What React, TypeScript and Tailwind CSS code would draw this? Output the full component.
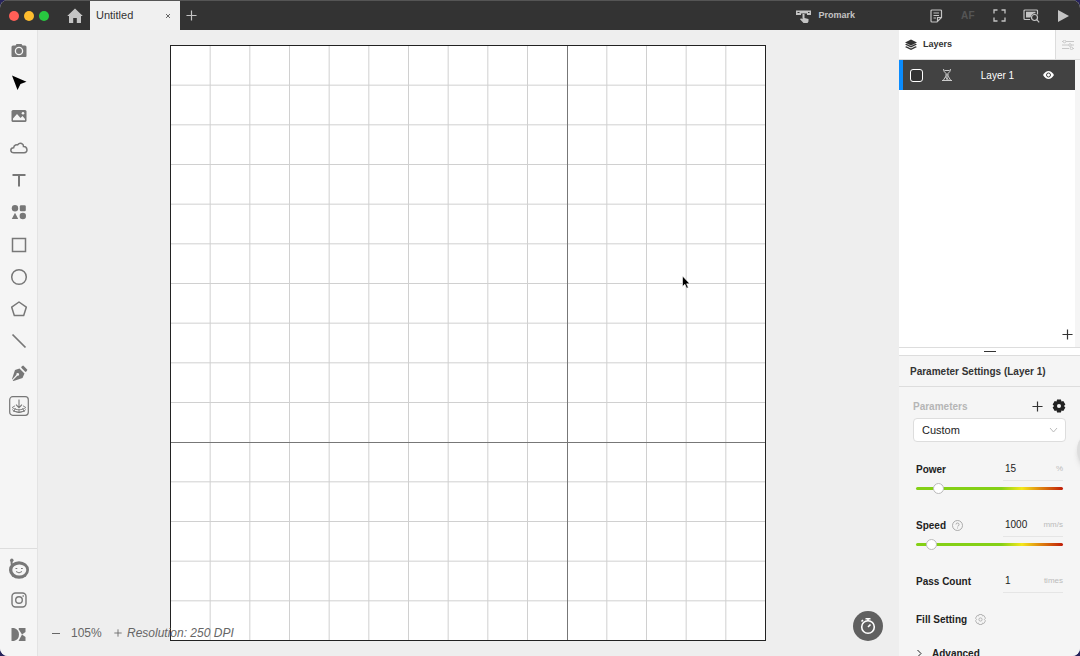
import { useState } from 'react';
import type { ReactNode } from 'react';

const CELLS = 15;
const AXIS = 10;
const BOARD = 595;

const icon = { fill: 'none', stroke: 'currentColor', strokeWidth: 1.5 } as const;

const tools: { name: string; active?: boolean; art: ReactNode }[] = [
  {
    name: 'Camera',
    art: (
      <>
        <path fill="currentColor" d="M5 4.500h1.500L7.500 3h5l1 1.500H16q1.500 0 1.500 1.500v9q0 1-1 1h-13q-1 0-1-1V6q0-1.500 1.500-1.500z" />
        <circle cx="10" cy="10" r="3.600" fill="none" stroke="#f5f5f5" strokeWidth="1.300" />
      </>
    ),
  },
  { name: 'Select', active: true, art: <path fill="currentColor" d="M3 2.500 17.500 8.800 11.500 11 8.500 17z" /> },
  {
    name: 'Image',
    art: (
      <>
        <rect x="2.500" y="4" width="15" height="12" rx="1.500" fill="currentColor" />
        <path fill="#f5f5f5" d="M4 12.500 8 8l3.500 4 2-2 2.500 3v1.300H4z" />
        <circle cx="14" cy="7.300" r="1.300" fill="#f5f5f5" />
      </>
    ),
  },
  { name: 'Cloud', art: <path {...icon} d="M5 14.800c-4 0-4.300-4.600-.4-5C5 6.500 8 6.500 8.700 6.800 11 3.800 14.700 5.800 14.500 8.500c4-.2 5 6.300.5 6.300z" /> },
  { name: 'Text', art: <path {...icon} strokeWidth="2" d="M3.500 5h13M10 5v11.500" /> },
  {
    name: 'Shapes',
    art: (
      <g fill="currentColor">
        <circle cx="6" cy="6.300" r="3.200" />
        <rect x="10.800" y="3.300" width="6" height="6" rx="1.200" />
        <path d="M6 10.700 9.200 17H2.800z" />
        <circle cx="13.800" cy="14" r="3.200" />
      </g>
    ),
  },
  { name: 'Rectangle', art: <rect {...icon} x="3.500" y="3.500" width="13" height="13" /> },
  { name: 'Ellipse', art: <circle {...icon} cx="10" cy="10" r="7.300" /> },
  { name: 'Polygon', art: <path {...icon} strokeLinejoin="round" d="m10 3 7.300 5.200-2.600 8.300H5.300L2.700 8.200z" /> },
  { name: 'Line', art: <path {...icon} strokeWidth="1.700" d="m3.500 3.500 13 13" /> },
  {
    name: 'Pen',
    art: (
      <>
        <path fill="currentColor" d="M10.500 4.500 15.500 9.500 13.500 14 4.500 17l-.8-.6 4.600-4.700a1.400 1.400 0 1 0-.9-.9L3.200 15.500 3 15l3-9z" />
        <path fill="currentColor" d="m12.800 2.200 1.400-.6 4.200 4.200-.8 1.500-1.200.6-4.300-4.300z" />
      </>
    ),
  },
  {
    name: 'Material',
    art: (
      <g fill="none" stroke="currentColor">
        <rect x=".7" y=".7" width="18.600" height="18.600" rx="3" strokeWidth="1.200" />
        <path d="M10 3.500v8M7 8.700l3 3 3-3" strokeWidth="1.100" />
        <path d="M6 9.800 3.200 11.500c3.500 3 10.100 3 13.600 0L14 9.800M3.200 13.500c3.500 3.500 10.100 3.500 13.600 0M4 15q6 3 12 0M6.500 12.200l-1.500 3M10 13.500v3.500M13.500 12.200l1.500 3" strokeWidth=".9" />
      </g>
    ),
  },
];

function Gear({ className, fill, stroke, hole }: { className: string; fill: string; stroke?: string; hole: string }) {
  return (
    <svg className={className} viewBox="0.5 0.5 13 13" stroke={stroke} strokeLinejoin="round">
      <path fill={fill} d="M5.200 1h3.600l.5 1.800 1.700-.5 1.900 3.200L11.600 7l1.300 1.500-1.900 3.200-1.700-.5-.5 1.800H5.200l-.5-1.800-1.700.5-1.900-3.200L2.400 7 1.100 5.500 3 2.300l1.700.5z" />
      <circle cx="7" cy="7" r="1.900" fill={hole} />
    </svg>
  );
}

function Plus({ className }: { className: string }) {
  return (
    <svg className={className} viewBox="0 0 12 12" fill="none" stroke="currentColor" strokeWidth="1.300">
      <path d="M6 .5v11M.5 6h11" />
    </svg>
  );
}

function TitleBar() {
  return (
    <header className="flex h-[30px] shrink-0 items-center border-t border-[#555] bg-[#333] text-[#c4c4c4]">
      <div className="flex gap-[5px] pl-[9px]">
        <button aria-label="Close" className="size-[10px] rounded-full bg-[#ff5f57]" />
        <button aria-label="Minimize" className="size-[10px] rounded-full bg-[#febc2e]" />
        <button aria-label="Zoom" className="size-[10px] rounded-full bg-[#28c840]" />
      </div>
      <button aria-label="Home" className="ml-[18px] mr-[7px]">
        <svg className="size-4" viewBox="0 0 16 16" fill="currentColor">
          <path d="M8 .5 15.800 8H14v7H9.800v-5H6.200v5H2V8H.2z" />
        </svg>
      </button>
      <div className="flex h-full w-[90px] items-center justify-between bg-[#f0f0f0] pl-[6px] pr-[8px] text-[11px] text-[#333]">
        <span>Untitled</span>
        <button aria-label="Close tab">
          <svg className="size-2" viewBox="0 0 8 8" stroke="#666" fill="none">
            <path d="m2 2 4 4m0-4L2 6" />
          </svg>
        </button>
      </div>
      <button aria-label="New tab" className="ml-[6px]">
        <Plus className="size-[11px]" />
      </button>
      <button className="ml-auto mr-16 flex items-center gap-[7px] text-[9px] font-bold">
        <svg className="h-4 w-[15px]" viewBox="0 0 15 16" fill="currentColor">
          <path fillRule="evenodd" d="M0 2.500h15v4.500h-4V5.500H5V7H0zM1.500 4v1h2V4zM12 4v1h1.500V4z" />
          <path d="M6.500 6h2v4l4 1v2.500L11.500 15h-4L4 11.300l1-1 1.500 1z" />
        </svg>
        Promark
      </button>
      <nav className="flex pr-px">
        <button aria-label="Notes" className="grid w-8 place-items-center pl-[2px]">
          <svg className="size-[14px]" viewBox="0 0 14 14" fill="none" stroke="currentColor" strokeWidth="1.200">
            <path d="M12.500 8.500V2q0-1-1-1H3Q2 1 2 2v10q0 1 1 1h5zM12.500 8.500H8.500v4M4.500 4h5.500M4.500 6.500h5.500M4.500 9h2.500" />
          </svg>
        </button>
        <button className="w-8 pl-[2px] text-[10px] font-bold tracking-wide text-[#555]">AF</button>
        <button aria-label="Frame" className="grid w-8 place-items-center">
          <svg className="size-[13px]" viewBox="0 0 13 13" fill="none" stroke="currentColor" strokeWidth="1.300">
            <path d="M1 4.500V1h3.500M8.500 1H12v3.500M12 8.500V12H8.500M4.500 12H1V8.500" />
          </svg>
        </button>
        <button aria-label="Preview" className="grid w-8 place-items-center">
          <svg className="h-[14px] w-[17px]" viewBox="0 0 17 14" fill="none" stroke="currentColor" strokeWidth="1.200">
            <path d="M14.500 5.500V2q0-1-1-1H2Q1 1 1 2v7.500q0 1 1 1h5" />
            <path d="M3 2.800h9.500v1.500Q9 4 7.500 8.500H3z" fill="currentColor" stroke="none" />
            <circle cx="11.500" cy="8.500" r="3" />
            <path d="m13.700 10.700 2.500 2.700" />
          </svg>
        </button>
        <button aria-label="Start" className="grid w-8 place-items-center">
          <svg className="size-3" viewBox="0 0 12 12" fill="currentColor">
            <path d="M1 0v12l11-6z" />
          </svg>
        </button>
      </nav>
    </header>
  );
}

function ToolBar() {
  return (
    <aside className="flex w-[38px] shrink-0 flex-col items-center border-r border-[#e3e3e3] bg-[#f5f5f5] text-[#777]">
      <div className="mt-[5px] flex h-[387px] flex-col">
        {tools.map((t) => (
          <button key={t.name} aria-label={t.name} className={`grid min-h-0 flex-1 place-items-center ${t.active ? 'text-black' : ''}`}>
            <svg className="size-5" viewBox="0 0 20 20">{t.art}</svg>
          </button>
        ))}
      </div>
      <div className="mt-auto flex w-full flex-col items-center border-t border-[#ddd] pb-[15px] pt-[9px]">
        <button aria-label="Community" className="mb-3">
          <svg className="size-[22px]" viewBox="0 0 22 22">
            <path d="M4 10 3.500 3" stroke="currentColor" strokeWidth="2" />
            <circle cx="3.800" cy="2.200" r="1.700" fill="currentColor" />
            <ellipse cx="11" cy="12" rx="10" ry="8.700" fill="currentColor" />
            <ellipse cx="11.300" cy="12" rx="7" ry="5.600" fill="#f5f5f5" />
            <path d="M7.500 10.500h1.800M13 10.500h1.800M8 13.500q3 2.800 6 0" fill="none" stroke="currentColor" />
          </svg>
        </button>
        <button aria-label="Instagram" className="mb-5">
          <svg className="size-4" viewBox="0 0 16 16" fill="none" stroke="currentColor" strokeWidth="1.400">
            <rect x="1" y="1" width="14" height="14" rx="3.500" />
            <circle cx="8" cy="8" r="3.300" />
            <path d="M11.500 4h1.400" />
          </svg>
        </button>
        <button aria-label="Store">
          <svg className="h-[13px] w-[15px]" viewBox="0 0 15 13" fill="currentColor">
            <path d="M.5 0h2.500q5 1.500 5 6.500T3 13H.5zM8 0h6.500v4L11 6.500 7.500 1zM11 6.500l3.500 2.500v4H7.500z" />
          </svg>
        </button>
      </div>
    </aside>
  );
}

function Board() {
  const lines = Array.from({ length: CELLS - 1 }, (_, i) => i + 1).filter((n) => n !== AXIS);
  return (
    <svg className="aspect-square h-full max-w-full" viewBox="0 0 596 596" fill="none">
      <rect x=".5" y=".5" width="595" height="595" fill="#fff" />
      {lines.map((n) => {
        const p = (n * BOARD) / CELLS + 0.5;
        return <path key={n} d={`M${p} 0V596M0 ${p}H596`} stroke="#d0d0d0" />;
      })}
      <path d="M397.500 0V596M0 397.500H596" stroke="#777" />
      <rect x=".5" y=".5" width="595" height="595" stroke="#222" />
      <path d="M512.500 231v10.500l2.400-2.200 1.700 4 1.700-.8-1.700-3.700h3.200z" fill="#000" stroke="#fff" strokeWidth=".6" />
    </svg>
  );
}

function Workspace() {
  return (
    <main className="relative flex min-w-0 flex-1 justify-center bg-[#eee] py-[15px] pr-px">
      <Board />
      <div className="absolute bottom-[15px] left-[14px] flex items-center text-[12px] leading-4 text-[#666]">
        <button aria-label="Zoom out" className="mr-[11px]">
          <svg className="size-2" viewBox="0 0 8 8" stroke="currentColor"><path d="M0 4.500h8" /></svg>
        </button>
        <span className="w-[32px]">105%</span>
        <button aria-label="Zoom in" className="ml-[11px] mr-[5px]">
          <Plus className="size-2" />
        </button>
        <span className="italic">Resolution: 250 DPI</span>
      </div>
      <button aria-label="Time estimate" className="absolute bottom-[15px] right-4 grid size-[30px] place-items-center rounded-full bg-[#606060] text-white">
        <svg className="size-[18px]" viewBox="0 0 18 18" fill="none" stroke="currentColor" strokeWidth="1.600">
          <circle cx="9" cy="10" r="6.300" />
          <path d="M6.500 1.800h5M9 2v2M2.500 4.500 4 3M9 10l2.500-2.500" />
        </svg>
      </button>
    </main>
  );
}

function Layers() {
  const [on, setOn] = useState(false);
  return (
    <section className="flex h-[318px] shrink-0 flex-col border-b border-[#ddd] bg-white">
      <div className="flex h-[30px] shrink-0 border-b border-[#ddd]">
        <h2 className="flex flex-1 items-center gap-[6px] pl-[6px] text-[9px] font-bold">
          <svg className="size-3" viewBox="0 0 12 12" fill="currentColor">
            <path d="m6 .5 6 3-6 3-6-3zM0 5.500l1.500-.7L6 7l4.500-2.200 1.500.7-6 3zM0 8l1.500-.7L6 9.500l4.500-2.200L12 8l-6 3z" />
          </svg>
          Layers
        </h2>
        <button aria-label="Layer options" className="grid w-[25px] place-items-center border-l border-[#ddd] bg-[#f5f5f5] text-[#c8c8c8]">
          <svg className="h-[10px] w-3" viewBox="0 0 12 10" fill="none" stroke="currentColor">
            <path d="M0 1.500h1M4 1.500h8M0 5h6.500M9.500 5H12M0 8.500h7M11 8.500h1" />
            <circle cx="2.500" cy="1.500" r="1.300" />
            <circle cx="8" cy="5" r="1.300" />
            <circle cx="9.500" cy="8.300" r="1.300" />
          </svg>
        </button>
      </div>
      <div className="flex min-h-0 flex-1 flex-col border-r-[5px] border-[#f5f5f5]">
        <div className="flex h-[30px] items-center border-l-4 border-[#0a8cff] bg-[#424242] pl-[7px] pr-5 text-white">
          <input
            type="checkbox"
            aria-label="Select Layer 1"
            checked={on}
            onChange={() => setOn(!on)}
            className="size-[13px] appearance-none rounded-[3px] border border-white bg-[#333] checked:bg-[#0a8cff]"
          />
          <svg className="ml-[19px] h-3 w-[10px]" viewBox="0 0 10 12" fill="none" stroke="#ddd" strokeWidth=".9">
            <path d="M1.500 0q0 2.500 2 4M8.500 0q0 2.500-2 4M2.500 1.500h5M4 4v3l-2.500 4M6 4v3l2.500 4M5 5v6M3.500 8.500l3 2M0 11.500h10" />
          </svg>
          <span className="flex-1 text-center text-[10px]">Layer 1</span>
          <button aria-label="Toggle visibility" className="pr-px">
            <svg className="h-2 w-[11px]" viewBox="0 0 11 8">
              <path fill="#fff" d="M0 4q2.500-4 5.500-4T11 4Q8.500 8 5.500 8T0 4z" />
              <circle cx="5.500" cy="4" r="2" fill="none" stroke="#424242" />
            </svg>
          </button>
        </div>
        <button aria-label="Add layer" className="mb-[7px] ml-auto mr-[2px] mt-auto">
          <Plus className="size-[11px]" />
        </button>
      </div>
    </section>
  );
}

function Field({ label, value, unit, help }: { label: string; value: string; unit: string; help?: boolean }) {
  return (
    <div className="flex items-center text-[10px] text-[#222]">
      <label htmlFor={label} className="font-bold">{label}</label>
      {help && (
        <svg className="ml-[6px] size-[11px]" viewBox="0 0 11 11" fill="none" stroke="#999" strokeWidth=".8">
          <circle cx="5.500" cy="5.500" r="5" />
          <path d="M4 4.500q0-1.500 1.500-1.500T7 4.500 5.500 6.300M5.500 7.500v1" />
        </svg>
      )}
      <div className="ml-auto flex h-6 w-[60px] items-center justify-between border-b border-[#e5e5e5] pl-[2px]">
        <input id={label} defaultValue={value} className="w-7 bg-transparent outline-none" />
        <span className="text-[8px] text-[#bbb]">{unit}</span>
      </div>
    </div>
  );
}

function Slider({ label, value, max }: { label: string; value: number; max: number }) {
  return (
    <div className="mb-[23px] mt-[6px] flex h-[3px] items-center rounded-full bg-[linear-gradient(90deg,#84d016_0%,#84d016_58%,#f4e81c_72%,#e08a10_84%,#c01c08_100%)]">
      <input
        type="range"
        aria-label={label}
        defaultValue={value}
        max={max}
        className="-mx-[5px] h-[11px] min-w-0 flex-1 appearance-none bg-transparent [&::-webkit-slider-thumb]:size-[11px] [&::-webkit-slider-thumb]:appearance-none [&::-webkit-slider-thumb]:rounded-full [&::-webkit-slider-thumb]:border [&::-webkit-slider-thumb]:border-[#bbb] [&::-webkit-slider-thumb]:bg-white"
      />
    </div>
  );
}

function Parameters() {
  return (
    <section className="flex min-h-0 flex-1 flex-col overflow-hidden">
      <div className="grid h-[7px] shrink-0 place-items-center bg-white">
        <div className="h-px w-3 bg-[#333]" />
      </div>
      <h2 className="flex h-8 shrink-0 items-center border-y border-[#ddd] pl-[11px] text-[10px] font-bold">Parameter Settings (Layer 1)</h2>
      <div className="flex shrink-0 flex-col px-[14px] pt-[11px]">
        <div className="flex h-4 items-center">
          <label htmlFor="preset" className="flex-1 text-[10px] font-bold text-[#b5b5b5]">Parameters</label>
          <button aria-label="Add preset" className="mr-[9px]"><Plus className="size-[11px]" /></button>
          <button aria-label="Preset settings"><Gear className="size-[14px]" fill="#222" hole="#f5f5f5" /></button>
        </div>
        <div className="relative mt-[4px]">
          <select id="preset" className="block h-6 w-full appearance-none rounded-[4px] border border-[#ddd] bg-white pl-2 text-[11px] text-[#222] outline-none">
            <option>Custom</option>
          </select>
          <svg className="pointer-events-none absolute right-2 top-2 h-2 w-[9px]" viewBox="0 0 9 8" fill="none" stroke="#bbb">
            <path d="m1 2 3.500 4L8 2" />
          </svg>
        </div>
        <div className="flex flex-col px-[3px] pt-[15px]">
          <Field label="Power" value="15" unit="%" />
          <Slider label="Power level" value={15} max={100} />
          <Field label="Speed" value="1000" unit="mm/s" help />
          <Slider label="Speed level" value={1000} max={10000} />
          <Field label="Pass Count" value="1" unit="times" />
          <div className="mt-4 flex h-5 items-center gap-2 text-[10px] font-bold text-[#222]">
            Fill Setting
            <button aria-label="Fill options"><Gear className="size-[11px]" fill="none" stroke="#aaa" hole="none" /></button>
          </div>
          <button className="mt-[14px] flex h-5 items-center gap-[9px] text-[10px] font-bold text-[#222]">
            <svg className="size-[7px]" viewBox="0 0 7 7" fill="none" stroke="currentColor"><path d="m1.500 0 3.500 3.500L1.500 7" /></svg>
            Advanced
          </button>
        </div>
      </div>
    </section>
  );
}

export default function App() {
  return (
    <div className="h-screen bg-[#27245c] font-['Liberation_Sans',sans-serif]">
      <div className="relative flex h-full flex-col overflow-hidden rounded-[8px] bg-[#f5f5f5] text-[#333]">
        <TitleBar />
        <div className="flex min-h-0 flex-1">
          <ToolBar />
          <Workspace />
          <aside className="flex w-[181px] shrink-0 flex-col bg-[#f5f5f5]">
            <Layers />
            <Parameters />
          </aside>
        </div>
        <div className="absolute -right-[37px] top-[430px] size-10 rounded-full bg-[#ddd] shadow-md" />
      </div>
    </div>
  );
}
